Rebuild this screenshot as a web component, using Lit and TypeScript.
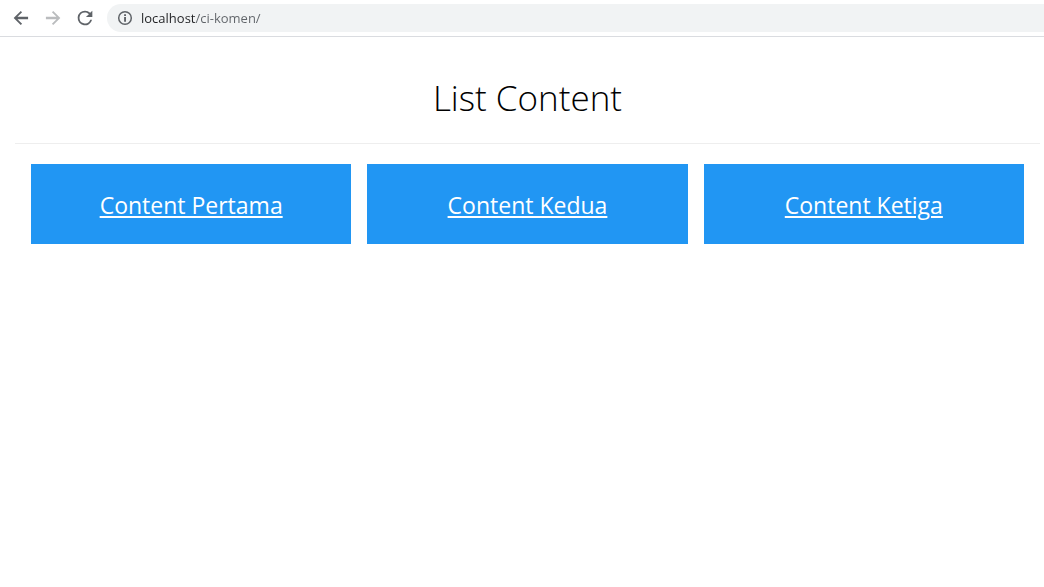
import { LitElement, html, css } from "lit";
import { customElement, property, state } from "lit/decorators.js";

@customElement("browser-bar")
class BrowserBar extends LitElement {
  @property() url = "";

  static styles = css`
    :host {
      display: block;
    }
    .bar {
      display: flex;
      align-items: center;
      height: 36px;
      padding-left: 9px;
      border-bottom: 1px solid #dadce0;
      background: #fff;
    }
    .nav {
      display: flex;
      gap: 8px;
    }
    .btn {
      display: flex;
      align-items: center;
      justify-content: center;
      width: 24px;
      height: 24px;
      padding: 0;
      border: 0;
      background: none;
      color: #5f6368;
    }
    .btn:disabled {
      color: #babcbe;
    }
    .icon {
      display: block;
      fill: currentColor;
    }
    .omnibox {
      display: flex;
      flex: 1;
      align-items: center;
      gap: 8px;
      height: 28px;
      margin-left: 10px;
      padding-left: 10px;
      border-radius: 14px 0 0 14px;
      background: #f1f3f4;
      color: #5f6368;
    }
    .address {
      flex: 1;
      min-width: 0;
      height: 20px;
      padding: 0;
      border: 0;
      outline: 0;
      font: 13px/20px "Open Sans", "Noto Sans", sans-serif;
      color: transparent;
      background: linear-gradient(90deg, #202124 55px, #5f6368 55px);
      -webkit-background-clip: text;
      background-clip: text;
    }
  `;

  render() {
    return html`
      <header class="bar">
        <nav class="nav" aria-label="Browser">
          <button class="btn" aria-label="Back">
            <svg class="icon" width="20" height="20" viewBox="0 0 24 24">
              <path d="M20.500 10.600H7.800l5.500-5.500L11.700 3.500 3.200 12l8.500 8.500 1.600-1.600-5.500-5.500h12.700z" />
            </svg>
          </button>
          <button class="btn" aria-label="Forward" disabled>
            <svg class="icon" width="20" height="20" viewBox="0 0 24 24">
              <path d="M3.500 10.600h12.700l-5.500-5.500 1.600-1.600 8.500 8.500-8.500 8.500-1.600-1.600 5.500-5.500H3.500z" />
            </svg>
          </button>
          <button class="btn" aria-label="Reload">
            <svg class="icon" width="22" height="22" viewBox="0 0 24 24">
              <path d="M17.650 6.350A7.958 7.958 0 0 0 12 4a8 8 0 1 0 7.730 10h-2.080A6 6 0 1 1 12 6c1.660 0 3.140.69 4.220 1.780L13 11h7V4z" />
            </svg>
          </button>
        </nav>
        <div class="omnibox">
          <svg class="icon" width="16" height="16" viewBox="0 0 16 16" aria-hidden="true">
            <circle cx="8" cy="8" r="6.300" fill="none" stroke="currentColor" stroke-width="1.500" />
            <path d="M7.100 4.300H9v1.700H7.100zM7.100 7.100H9v4.600H7.100z" />
          </svg>
          <input class="address" aria-label="Address" .value=${this.url} spellcheck="false" />
        </div>
      </header>
    `;
  }
}

@customElement("app-root")
class AppRoot extends LitElement {
  @state() private items = ["Content Pertama", "Content Kedua", "Content Ketiga"];

  static styles = css`
    :host {
      display: block;
      min-height: 100vh;
      background: #fff;
      color: #000;
      font-family: "Open Sans", "Noto Sans", sans-serif;
    }
    .page {
      padding: 34px 4px 0 15px;
    }
    .title {
      margin: 0;
      font-size: 35px;
      line-height: 54px;
      font-weight: 350;
      text-align: center;
    }
    .rule {
      margin: 18px 0 20px;
      border: 0;
      border-top: 1px solid #eee;
    }
    .grid {
      display: grid;
      grid-template-columns: repeat(3, 1fr);
      gap: 16px;
      padding: 0 16px;
    }
    .card {
      padding: 22px 16px 20px;
      background: #2196f3;
      text-align: center;
    }
    .name {
      margin: 0;
      font-size: 23px;
      line-height: 38px;
      font-weight: 400;
    }
    .link {
      color: #fff;
      text-decoration: underline;
      text-decoration-thickness: 2px;
      text-underline-offset: 2px;
    }
  `;

  render() {
    return html`
      <browser-bar url="localhost/ci-komen/"></browser-bar>
      <main class="page">
        <h1 class="title">List Content</h1>
        <hr class="rule" />
        <section class="grid">
          ${this.items.map(
            (name) => html`
              <article class="card">
                <h2 class="name"><a class="link" href="#">${name}</a></h2>
              </article>
            `
          )}
        </section>
      </main>
    `;
  }
}
